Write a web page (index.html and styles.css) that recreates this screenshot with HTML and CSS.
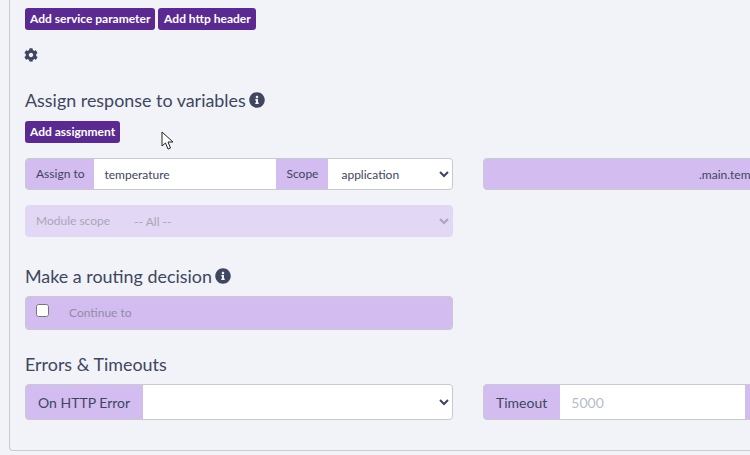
FILE: index.html
```html
<!DOCTYPE html>
<html lang="en">
<head>
    <meta charset="UTF-8">
    <title>Service connector</title>
    <link rel="stylesheet" href="styles.css">
</head>
<body>
    <div class="card">
        <div class="btn-row">
            <button class="btn">Add service parameter</button>
            <button class="btn btn-header">Add http header</button>
        </div>

        <svg class="gear" viewBox="0 0 512 512" width="14" height="14">
            <path d="M487.4 315.7l-42.6-24.6c4.3-23.2 4.3-47 0-70.2l42.6-24.6c4.900-2.800 7.100-8.600 5.500-14-11.100-35.600-30-67.800-54.700-94.600-3.800-4.100-10-5.100-14.800-2.300L380.800 110c-17.900-15.400-38.500-27.300-60.800-35.100V25.800c0-5.600-3.900-10.500-9.400-11.700-36.700-8.200-74.300-7.800-109.200 0-5.500 1.200-9.400 6.100-9.400 11.700V75c-22.200 7.900-42.800 19.800-60.800 35.100L88.700 85.500c-4.900-2.800-11-1.900-14.800 2.300-24.700 26.700-43.600 58.900-54.700 94.600-1.700 5.400.6 11.200 5.500 14L67.300 221c-4.300 23.200-4.300 47 0 70.200l-42.600 24.600c-4.900 2.800-7.100 8.600-5.500 14 11.100 35.600 30 67.800 54.700 94.600 3.800 4.100 10 5.100 14.800 2.300l42.600-24.600c17.900 15.400 38.500 27.300 60.800 35.100v49.200c0 5.600 3.900 10.500 9.400 11.700 36.700 8.200 74.300 7.800 109.200 0 5.500-1.200 9.400-6.100 9.400-11.700v-49.200c22.200-7.900 42.800-19.800 60.800-35.100l42.600 24.600c4.900 2.800 11 1.900 14.800-2.300 24.700-26.700 43.600-58.900 54.700-94.600 1.500-5.500-.7-11.300-5.600-14.100zM256 336c-44.100 0-80-35.900-80-80s35.900-80 80-80 80 35.900 80 80-35.900 80-80 80z"/>
        </svg>

        <h3 class="title title-assign">
            Assign response to variables
            <svg class="info" viewBox="0 0 512 512" width="16" height="16">
                <path d="M256 8C119 8 8 119 8 256s111 248 248 248 248-111 248-248S393 8 256 8zm0 110c23.200 0 42 18.800 42 42s-18.800 42-42 42-42-18.800-42-42 18.800-42 42-42zm56 254c0 6.600-5.400 12-12 12h-88c-6.600 0-12-5.400-12-12v-24c0-6.600 5.400-12 12-12h12v-64h-12c-6.600 0-12-5.400-12-12v-24c0-6.600 5.400-12 12-12h64c6.600 0 12 5.400 12 12v100h12c6.600 0 12 5.400 12 12v24z"/>
            </svg>
        </h3>
        <button class="btn">Add assignment</button>

        <div class="columns columns-assign">
            <div class="group">
                <span class="addon">Assign to</span>
                <input class="field field-name" type="text" value="temperature">
                <span class="addon">Scope</span>
                <select class="field field-scope"><option>application</option></select>
            </div>
            <div class="group group-path">.main.temp</div>
        </div>

        <div class="columns columns-module">
            <div class="group group-disabled">
                <span class="addon">Module scope</span>
                <select class="field field-module" disabled><option>-- All --</option></select>
            </div>
        </div>

        <h3 class="title title-routing">
            Make a routing decision
            <svg class="info" viewBox="0 0 512 512" width="16" height="16">
                <path d="M256 8C119 8 8 119 8 256s111 248 248 248 248-111 248-248S393 8 256 8zm0 110c23.200 0 42 18.800 42 42s-18.800 42-42 42-42-18.800-42-42 18.800-42 42-42zm56 254c0 6.600-5.400 12-12 12h-88c-6.600 0-12-5.400-12-12v-24c0-6.600 5.400-12 12-12h12v-64h-12c-6.600 0-12-5.400-12-12v-24c0-6.600 5.400-12 12-12h64c6.600 0 12 5.400 12 12v100h12c6.600 0 12 5.400 12 12v24z"/>
            </svg>
        </h3>
        <div class="columns">
            <div class="group group-route">
                <input class="check" type="checkbox">
                <span class="route-label">Continue to</span>
            </div>
        </div>

        <h3 class="title title-errors">Errors &amp; Timeouts</h3>
        <div class="columns">
            <div class="group group-large">
                <span class="addon">On HTTP Error</span>
                <select class="field field-grow"><option></option></select>
            </div>
            <div class="group group-large">
                <span class="addon">Timeout</span>
                <input class="field field-timeout" type="text" placeholder="5000">
                <span class="addon"></span>
            </div>
        </div>
    </div>

    <!-- mouse pointer caught in the capture -->
    <svg class="pointer" viewBox="0 0 14 20" width="14" height="20">
        <path d="M1 1v14l3.500-3 2.500 6 2.500-1-2.500-6H12z" fill="#fff" stroke="#222" stroke-width="1"/>
    </svg>
</body>
</html>
```

FILE: styles.css
```css
html, body {
    height: 455px;
    overflow: hidden;
}
body {
    position: relative;
    margin: 0;
    background-color: #f1f3f8;
    color: #3e4660;
    font-family: Lato, "Open Sans", sans-serif;
}
.card {
    box-sizing: border-box;
    width: 1000px;
    height: 451px;
    margin-left: 9px;
    padding: 8px 15px 0;
    border: 1px solid #c8cad0;
    border-top: none;
    border-radius: 0 0 4px 4px;
}
.btn-row {
    display: flex;
    gap: 3px;
}
.btn {
    display: block;
    height: 22px;
    padding: 0 5px 2px;
    border: none;
    border-radius: 3px;
    background-color: #5b2a91;
    color: white;
    font-family: inherit;
    font-size: 12px;
    font-weight: bold;
}
.btn-header {
    width: 98px;
}
.gear {
    display: block;
    margin: 18px 0 0 -1px;
    fill: #3e4660;
}
.title {
    display: flex;
    align-items: center;
    gap: 3.5px;
    margin: 0;
    height: 22px;
    font-size: 17.9px;
    font-weight: normal;
}
.info {
    fill: #3e4660;
}
.title-assign {
    margin-top: 27px;
    margin-bottom: 10px;
}
.title-routing {
    margin-top: 28px;
    margin-bottom: 9px;
}
.title-errors {
    margin-top: 23px;
    margin-bottom: 9px;
}
.columns {
    display: grid;
    grid-template-columns: 428px 428px;
    column-gap: 30px;
}
.columns-assign {
    margin-top: 15px;
}
.columns-module {
    margin-top: 15px;
}
.group {
    box-sizing: border-box;
    display: flex;
    align-items: stretch;
    height: 32px;
    border: 1px solid #c8cad0;
    border-radius: 4px;
    background-color: #d3bcf0;
    font-size: 12px;
    overflow: hidden;
}
.addon {
    display: flex;
    align-items: center;
    padding: 0 10px 2px;
    flex-shrink: 0;
}
.field {
    box-sizing: border-box;
    border: none;
    border-radius: 0;
    outline: none;
    background-color: white;
    color: #3e4660;
    font-family: inherit;
    font-size: 12px;
}
.field-name {
    width: 182px;
    padding: 0 10px;
}
.field-scope {
    flex: 1;
    min-width: 0;
    padding-left: 9px;
}
.group-path {
    align-items: center;
    padding-left: 215px;
}
.group-disabled {
    border-color: #e2d7f5;
    background-color: #e2d7f5;
    color: #a9a6b8;
}
.field-module {
    flex: 1;
    padding-left: 10px;
    background-color: transparent;
    color: #a9a6b8;
    opacity: 1;
}
.group-route {
    align-items: flex-start;
    height: 34px;
    color: #918ca6;
}
.check {
    width: 13px;
    height: 13px;
    margin: 7px 0 0 10px;
}
.route-label {
    margin: 8px 0 0 20px;
}
.group-large {
    height: 36px;
    font-size: 14px;
}
.group-large .addon {
    padding: 0 13px 0 12px;
}
.group-large .field {
    font-size: 14px;
}
.field-grow {
    flex: 1;
    min-width: 0;
}
.field-timeout {
    width: 185px;
    padding: 0 11px;
}
.field-timeout::placeholder {
    color: #b8bcc8;
}
.pointer {
    position: absolute;
    left: 161px;
    top: 131px;
}
```
